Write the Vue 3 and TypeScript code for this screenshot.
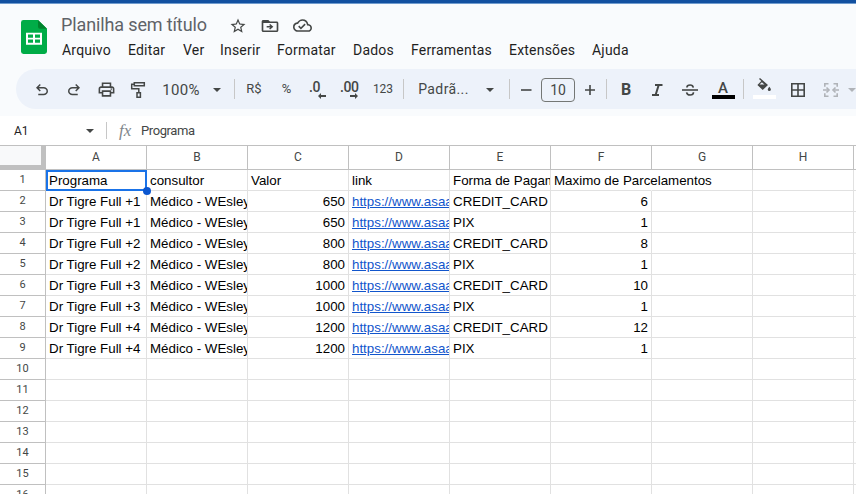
<script setup lang="ts">
interface MenuItem { label: string; width: number }

const menus: MenuItem[] = [
  { label: 'Arquivo', width: 50 },
  { label: 'Editar', width: 39 },
  { label: 'Ver', width: 21 },
  { label: 'Inserir', width: 41 },
  { label: 'Formatar', width: 60 },
  { label: 'Dados', width: 42 },
  { label: 'Ferramentas', width: 82 },
  { label: 'Extensões', width: 67 },
  { label: 'Ajuda', width: 38 },
]

const columns = ['A', 'B', 'C', 'D', 'E', 'F', 'G', 'H', '']

const link = 'https://www.asaa'
const data: string[][] = [
  ['Programa', 'consultor', 'Valor', 'link', 'Forma de Pagam', 'Maximo de Parcelamentos'],
]
const prices = [650, 800, 1000, 1200]
const limits = [6, 8, 10, 12]
prices.forEach((price, i) => {
  const base = [`Dr Tigre Full +${i + 1}`, 'Médico - WEsley', String(price), link]
  data.push([...base, 'CREDIT_CARD', String(limits[i])])
  data.push([...base, 'PIX', '1'])
})

const rows = Array.from({ length: 16 }, (_, i) => i)

function cellText(row: number, col: number): string {
  return data[row]?.[col] ?? ''
}
function cellClass(row: number, col: number) {
  return {
    number: row > 0 && (col === 2 || col === 5),
    spill: row === 0 && col === 5,
    active: row === 0 && col === 0,
  }
}
</script>

<template>
  <div class="app">
    <div class="window-edge"></div>
    <header class="header">
      <svg class="logo" width="26" height="34" viewBox="0 0 26 35" preserveAspectRatio="none">
        <path d="M2.500 0H17l9 9v23.500a2.500 2.500 0 0 1-2.500 2.500h-21A2.500 2.500 0 0 1 0 32.500v-30A2.500 2.500 0 0 1 2.500 0z" fill="#00ac47" />
        <path d="M17 0l9 9h-7a2 2 0 0 1-2-2z" fill="#00832d" />
        <path d="M5 13h16v12.500H5zM7 15v3.300h5V15zm7 0v3.300h5V15zm-7 5.200v3.300h5v-3.300zm7 0v3.300h5v-3.300z" fill="#fff" fill-rule="evenodd" />
      </svg>
      <div class="heading">
        <div class="title-row">
          <span class="title">Planilha sem título</span>
          <svg class="star" width="18" height="18" viewBox="0 0 24 24"><path d="M22 9.240l-7.190-.62L12 2 9.190 8.630 2 9.240l5.460 4.730L5.820 21 12 17.270 18.180 21l-1.630-7.030L22 9.240zM12 15.400l-3.760 2.270 1-4.280-3.320-2.880 4.380-.38L12 6.100l1.710 4.040 4.380.38-3.320 2.880 1 4.280L12 15.400z" /></svg>
          <svg class="folder" width="20" height="18" viewBox="0 0 24 24" preserveAspectRatio="none"><path d="M20 6h-8l-2-2H4c-1.100 0-2 .9-2 2v12c0 1.100.9 2 2 2h16c1.100 0 2-.9 2-2V8c0-1.100-.9-2-2-2zm0 12H4V8h16v10zM12.200 9.200l-1.300 1.300 1.500 1.500H8v2h4.400l-1.500 1.500 1.300 1.300 3.800-3.800z" /></svg>
          <svg class="cloud" width="19" height="19" viewBox="0 0 24 24"><path d="M19.350 10.040A7.490 7.490 0 0 0 12 4C9.110 4 6.600 5.640 5.350 8.040A5.994 5.994 0 0 0 0 14c0 3.310 2.690 6 6 6h13c2.760 0 5-2.240 5-5 0-2.640-2.050-4.780-4.650-4.960zM19 18H6c-2.210 0-4-1.790-4-4 0-2.050 1.530-3.760 3.560-3.970l1.070-.11.5-.95A5.469 5.469 0 0 1 12 6c2.620 0 4.880 1.860 5.390 4.430l.3 1.500 1.530.11A2.980 2.980 0 0 1 22 15c0 1.650-1.350 3-3 3zm-9-3.820l-2.090-2.090L6.500 13.500 10 17l6.010-6.010-1.410-1.410z" /></svg>
        </div>
        <nav class="menus">
          <span v-for="m in menus" :key="m.label" :style="{ width: m.width + 'px' }">{{ m.label }}</span>
        </nav>
      </div>
    </header>

    <div class="toolbar">
      <div><svg width="18" height="18" viewBox="0 0 24 24"><path d="M7 19v-2h7.100q1.575 0 2.737-1T18 13.500 16.837 11 14.100 10H7.800l2.600 2.600L9 14 4 9l5-5 1.400 1.400L7.800 8h6.300q2.425 0 4.163 1.575T20 13.500t-1.737 3.925T14.100 19z" /></svg></div>
      <div><svg width="18" height="18" viewBox="0 0 24 24"><path d="M9.900 19q-2.425 0-4.163-1.575T4 13.500t1.737-3.925T9.900 8h6.300l-2.600-2.600L15 4l5 5-5 5-1.400-1.400 2.600-2.600H9.900q-1.575 0-2.737 1T6 13.500 7.163 16 9.900 17H17v2z" /></svg></div>
      <div><svg width="19" height="19" viewBox="0 0 24 24"><path d="M19 8h-1V3H6v5H5c-1.660 0-3 1.340-3 3v6h4v4h12v-4h4v-6c0-1.660-1.340-3-3-3zM8 5h8v3H8zm8 14H8v-4h8zm2-4v-2H6v2H4v-4c0-.55.45-1 1-1h14c.55 0 1 .45 1 1v4z" /><circle cx="18" cy="11.500" r="1" /></svg></div>
      <div><svg width="16" height="18" viewBox="0 0 16 18"><g fill="none" stroke="#444746" stroke-width="1.500"><path d="M4.300 1.700h10v3h-10zM4 3.200H1.700v4.500h7.100v3.800M7 11.700h3.400v4.500H7z" /></g></svg></div>
      <div class="label zoom">100%</div>
      <div><i class="caret"></i></div>
      <div><i class="sep"></i></div>
      <div class="label small">R$</div>
      <div class="label small">%</div>
      <div class="decimal"><b>.0</b><svg width="8" height="6" viewBox="0 0 8 6"><path d="M3 0v2h5v2H3v2L0 3z" /></svg></div>
      <div class="decimal wide"><b>.00</b><svg width="8" height="6" viewBox="0 0 8 6"><path d="M5 0v2H0v2h5v2l3-3z" /></svg></div>
      <div class="label digits">123</div>
      <div><i class="sep"></i></div>
      <div class="label font">Padrã...</div>
      <div><i class="caret"></i></div>
      <div><i class="sep"></i></div>
      <div><svg width="12" height="12" viewBox="0 0 12 12"><path d="M1 5.200h10.500v1.600H1z" /></svg></div>
      <div><span class="size">10</span></div>
      <div><svg width="12" height="12" viewBox="0 0 12 12"><path d="M1 5.200h4.200V1h1.600v4.200H11v1.600H6.800V11H5.200V6.800H1z" /></svg></div>
      <div><i class="sep"></i></div>
      <div class="bold">B</div>
      <div><svg width="12" height="14" viewBox="0 0 12 14"><path d="M4 2h7.500M1 12h7M7.700 2L4.600 12" fill="none" stroke="#444746" stroke-width="2" /></svg></div>
      <div><svg width="16" height="14" viewBox="0 0 16 14"><g fill="none" stroke="#444746" stroke-width="1.600"><path d="M0 7h16" /><path d="M11.300 4.600C11 2.800 9.700 2 8.100 2 6.300 2 4.900 2.800 4.900 4.500M4.600 9.300c.3 1.900 1.700 2.700 3.500 2.700 2 0 3.400-.9 3.400-2.700" /></g></svg></div>
      <div class="swatch black"><span>A</span></div>
      <div><i class="sep"></i></div>
      <div class="swatch white"><svg width="16" height="15" viewBox="0 0 16 15"><path d="M3 1l1-1 8 7-5.300 5.100L1.400 7l3.900-4z" /><path d="M5.900 4.300L3.500 6.600h5z" fill="#edf2fa" /><path d="M13.300 8.800s1.500 1.600 1.500 2.700a1.500 1.500 0 0 1-3 0c0-1.100 1.500-2.700 1.500-2.700z" /></svg></div>
      <div><svg width="14" height="14" viewBox="0 0 14 14"><path d="M.8.8h12.400v12.400H.8zM7 .8v12.400M.8 7h12.400" fill="none" stroke="#444746" stroke-width="1.600" /></svg></div>
      <div class="disabled"><svg width="16" height="14" viewBox="0 0 16 14"><g fill="none" stroke="#b0b3b8" stroke-width="1.600"><path d="M5.500.8H1.800v3M10.500.8h3.700v3M1.800 10.200v3h3.700M14.200 10.200v3h-3.700M0 7h5M16 7h-5" /><path d="M3.500 4.500L6 7 3.500 9.500M12.500 4.500L10 7l2.500 2.500" /></g></svg></div>
      <div class="disabled"><i class="caret"></i></div>
    </div>

    <div class="formula">
      <span class="name">A1</span>
      <i class="caret"></i>
      <i class="rule"></i>
      <span class="fx">fx</span>
      <span class="content">Programa</span>
    </div>

    <div class="sheet">
      <div class="corner"></div>
      <div v-for="(c, i) in columns" :key="'h' + i" class="col-head">{{ c }}</div>
      <template v-for="r in rows" :key="r">
        <div class="row-head">{{ r + 1 }}</div>
        <div v-for="(c, i) in columns" :key="i" class="cell" :class="cellClass(r, i)">
          <a v-if="i === 3 && r > 0 && cellText(r, i)">{{ cellText(r, i) }}</a>
          <span v-else>{{ cellText(r, i) }}</span>
          <i v-if="r === 0 && i === 0" class="handle"></i>
        </div>
      </template>
    </div>
  </div>
</template>

<style>
body { margin: 0; overflow: hidden; }
</style>

<style scoped>
.app {
  width: 856px;
  height: 494px;
  overflow: hidden;
  background: #f9fbfd;
  font-family: Roboto, "Liberation Sans", sans-serif;
  color: #444746;
}
svg { display: block; fill: #444746; flex: none; }
.window-edge { height: 3px; background: #1250a0; border-bottom: 1px solid #6f9bce; }
.header { display: flex; height: 64px; }
.logo { margin: 16px 14px 0 21px; }
.heading { padding-top: 8px; }
.title-row { display: flex; align-items: center; height: 27px; }
.title { width: 168px; padding-bottom: 2px; font-size: 18px; letter-spacing: -0.13px; white-space: nowrap; color: #5f6368; }
.folder { margin-left: 13px; }
.cloud { margin-left: 13px; }
.menus { display: flex; gap: 16px; padding: 1px 0 0 1px; font-size: 14px; line-height: 20px; letter-spacing: 0.2px; color: #1f1f1f; white-space: nowrap; }

.toolbar {
  display: grid;
  grid-template-columns: 32px 32px 32px 31px 56px 16px 19px 20px 45px 18px 45px 22px 19px 61px 31px 9px 24px 40px 24px 9px 30px 32px 34px 32px 9px 32px 36px 30px 12px;
  width: 842px;
  height: 40px;
  margin: 1px 0 7px 16px;
  padding-left: 10px;
  box-sizing: border-box;
  border-radius: 20px 0 0 20px;
  background: #edf2fa;
}
.toolbar > div { display: flex; align-items: center; justify-content: center; min-width: 0; padding-top: 1px; }
.label { font-size: 14px; white-space: nowrap; }
.zoom { letter-spacing: 0.35px; font-size: 15px; }
.toolbar > .small { font-size: 13px; padding: 0 0 1px; }
.toolbar > .digits { font-size: 12px; padding: 0; }
.toolbar > .font { letter-spacing: 0.4px; padding: 0 0 1px; }
.caret { flex: none; width: 0; height: 0; border: 4.500px solid transparent; border-top-color: #444746; border-bottom: 0; }
.disabled .caret { border-top-color: #b0b3b8; }
.sep { width: 1px; height: 20px; margin-top: -1px; background: #c7c7c7; }
.toolbar > .decimal { flex-direction: column; align-items: flex-start; justify-content: flex-start; padding-top: 11px; }
.decimal b { font-size: 14px; line-height: 14px; font-weight: 500; letter-spacing: -0.4px; }
.decimal svg { margin: -1px 0 0 9px; }
.toolbar > .decimal.wide { padding-left: 13px; }
.wide svg { margin-left: 10px; }
.size { width: 32px; height: 22px; border: 1px solid #747775; border-radius: 4px; line-height: 23px; text-align: center; font-size: 14px; }
.bold { font-size: 16px; font-weight: 700; }
.toolbar > .swatch { flex-direction: column; justify-content: flex-start; padding-top: 9px; }
.swatch::after { content: ""; width: 23px; height: 4px; margin-top: 2px; background: #000; }
.swatch span { height: 15px; line-height: 20px; font-size: 15px; font-weight: 500; }
.swatch.white::after { background: #fff; }

.formula { display: flex; align-items: center; height: 29px; background: #fff; font-size: 13px; color: #444746; }
.name { width: 72px; padding-left: 14px; font-size: 12px; color: #1f1f1f; }
.rule { width: 1px; height: 17px; margin: 0 12px 0 12px; background: #c7c7c7; }
.fx { width: 22px; font-family: "Liberation Serif", serif; font-style: italic; font-size: 17px; line-height: 20px; color: #80868b; }
.content { letter-spacing: -0.4px; }

.sheet {
  display: grid;
  grid-template-columns: 46px repeat(9, 101px);
  grid-template-rows: 24px repeat(16, 21px);
  border-top: 1px solid #c0c0c0;
  background: #fff;
  font-family: "Liberation Sans", Arial, sans-serif;
}
.corner { box-sizing: border-box; border-right: 5px solid #c0c0c0; border-bottom: 5px solid #c0c0c0; background: #f8f9fa; }
.col-head, .row-head, .cell { box-sizing: border-box; min-width: 0; }
.col-head { border-right: 1px solid #c0c0c0; border-bottom: 1px solid #c0c0c0; font: 12px/23px Roboto, sans-serif; text-align: center; }
.row-head { border-right: 1px solid #c0c0c0; border-bottom: 1px solid #c0c0c0; font: 11px/20px Roboto, sans-serif; text-align: center; }
.cell { overflow: hidden; padding: 0 3px; border-right: 1px solid #e1e1e1; border-bottom: 1px solid #e1e1e1; font-size: 13.330px; line-height: 21px; white-space: nowrap; color: #000; }
.cell a { color: #1155cc; text-decoration: underline; }
.number { text-align: right; }
.spill { position: relative; z-index: 1; overflow: visible; border-right-color: transparent; }
.active { position: relative; z-index: 2; overflow: visible; border: 2px solid #1a73e8; padding: 0 1px; line-height: 17px; }
.handle { position: absolute; right: -6px; bottom: -6px; width: 8px; height: 8px; border-radius: 50%; background: #0b57d0; }
</style>
